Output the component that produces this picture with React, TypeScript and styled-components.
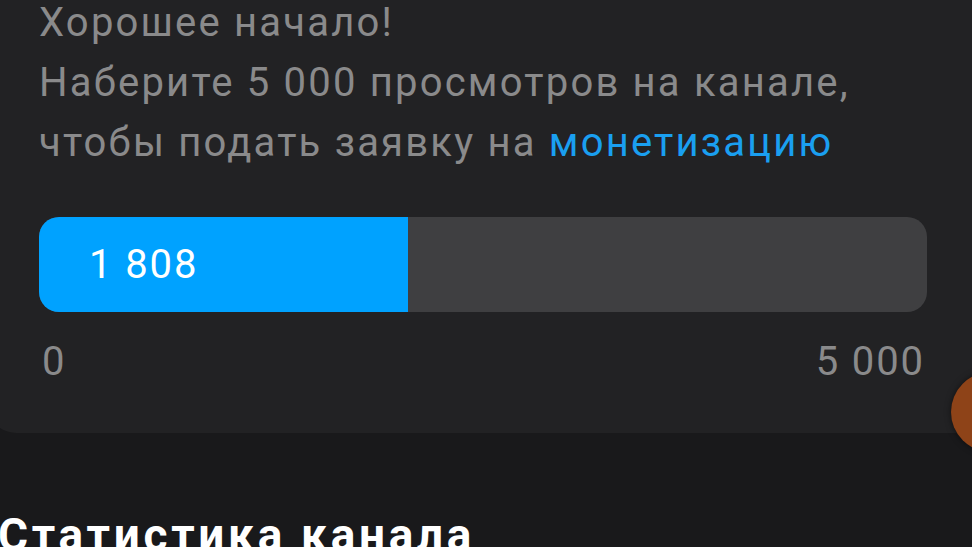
import styled, { createGlobalStyle } from "styled-components";

const GlobalStyle = createGlobalStyle`
  html, body {
    margin: 0;
    padding: 0;
    background: #19191b;
  }
  body {
    font-family: Roboto, "Noto Sans", "Liberation Sans", sans-serif;
  }
`;

const Page = styled.div`
  position: relative;
  width: 972px;
  height: 547px;
  overflow: hidden;
  background: #19191b;
`;

const Card = styled.section`
  margin: -30px -40px 0 -12px;
  padding: 23px 85px 47px 51px;
  background: #222224;
  border-radius: 0 0 28px 28px;
`;

const Intro = styled.p`
  margin: 0;
  font-size: 40px;
  line-height: 60px;
  letter-spacing: 2.2px;
  color: #8a8a8b;
  white-space: nowrap;
`;

const Accent = styled.span`
  color: #1a9ff0;
`;

const Track = styled.div`
  margin-top: 44px;
  height: 95px;
  display: flex;
  background: #3f3f41;
  border-radius: 20px;
  overflow: hidden;
`;

const Fill = styled.div<{ $pct: number }>`
  width: ${(p) => p.$pct}%;
  display: flex;
  align-items: center;
  padding-left: 50px;
  box-sizing: border-box;
  background: #00a2ff;
  color: #ffffff;
  font-size: 40px;
  letter-spacing: 1.9px;
`;

const Scale = styled.div`
  margin-top: 26px;
  display: flex;
  justify-content: space-between;
  font-size: 40px;
  line-height: 48px;
  letter-spacing: 1.9px;
  color: #8a8a8b;
  padding: 0 2px 0 3px;
`;

const Heading = styled.h2`
  margin: 76px 0 0 -2px;
  font-size: 46px;
  line-height: 52px;
  font-weight: 700;
  letter-spacing: 3.7px;
  color: #ffffff;
  white-space: nowrap;
`;

const Bubble = styled.div`
  position: absolute;
  left: 951px;
  top: 372px;
  width: 80px;
  height: 80px;
  border-radius: 50%;
  background: #8e4318;
  box-shadow: 0 0 6px rgba(0, 0, 0, 0.5);
`;

const App = (): JSX.Element => {
  return (
    <>
      <GlobalStyle />
      <Page>
        <Card>
          <Intro>
            Хорошее начало!
            <br />
            Наберите 5 000 просмотров на канале,
            <br />
            чтобы подать заявку на <Accent>монетизацию</Accent>
          </Intro>
          <Track>
            <Fill $pct={41.6}>1 808</Fill>
          </Track>
          <Scale>
            <span>0</span>
            <span>5 000</span>
          </Scale>
        </Card>
        <Heading>Статистика канала</Heading>
        <Bubble />
      </Page>
    </>
  );
};

export default App;
